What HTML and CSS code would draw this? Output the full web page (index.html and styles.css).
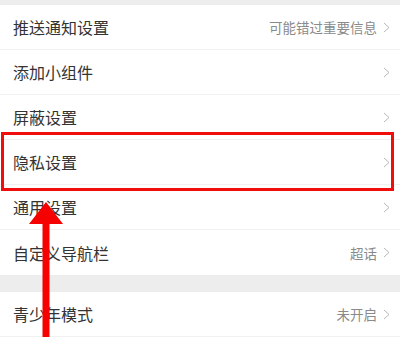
FILE: index.html
```html
<!DOCTYPE html>
<html>
<head>
<meta charset="utf-8">
<link rel="stylesheet" href="styles.css">
</head>
<body>
<div class="page">
  <div class="band band-top"></div>
  <div class="group">
    <div class="row"><span class="label">推送通知设置</span><span class="right"><span class="hint">可能错过重要信息</span><svg class="chev" viewBox="0 0 7 11"><path d="M1 1 L6 5.5 L1 10" /></svg></span></div>
    <div class="row"><span class="label">添加小组件</span><span class="right"><svg class="chev" viewBox="0 0 7 11"><path d="M1 1 L6 5.5 L1 10" /></svg></span></div>
    <div class="row"><span class="label">屏蔽设置</span><span class="right"><svg class="chev" viewBox="0 0 7 11"><path d="M1 1 L6 5.5 L1 10" /></svg></span></div>
    <div class="row"><span class="label">隐私设置</span><span class="right"><svg class="chev" viewBox="0 0 7 11"><path d="M1 1 L6 5.5 L1 10" /></svg></span></div>
    <div class="row"><span class="label">通用设置</span><span class="right"><svg class="chev" viewBox="0 0 7 11"><path d="M1 1 L6 5.5 L1 10" /></svg></span></div>
    <div class="row last"><span class="label">自定义导航栏</span><span class="right"><span class="hint">超话</span><svg class="chev" viewBox="0 0 7 11"><path d="M1 1 L6 5.5 L1 10" /></svg></span></div>
  </div>
  <div class="band band-mid"></div>
  <div class="group">
    <div class="row"><span class="label">青少年模式</span><span class="right"><span class="hint">未开启</span><svg class="chev" viewBox="0 0 7 11"><path d="M1 1 L6 5.5 L1 10" /></svg></span></div>
  </div>
  <div class="highlight"></div>
  <svg class="arrow" viewBox="0 0 40 140"><polygon points="20,0 37,22 23.5,22 23.5,140 16.5,140 16.5,22 3,22" /></svg>
</div>
</body>
</html>
```
FILE: styles.css
```css
html, body {
  margin: 0;
  padding: 0;
  background: #fff;
}
.page {
  position: relative;
  width: 400px;
  height: 337px;
  overflow: hidden;
  font-family: "Noto Sans CJK SC", "Noto Sans", sans-serif;
}
.band {
  background: #ededed;
}
.band-top {
  height: 5px;
}
.band-mid {
  height: 17px;
}
.group {
  background: #fff;
}
.row {
  height: 45px;
  box-sizing: border-box;
  display: flex;
  align-items: center;
  justify-content: space-between;
  padding: 0 10px 0 13px;
  border-bottom: 1px solid #f1f1f1;
}
.row.last {
  border-bottom: none;
}
.label {
  font-size: 16px;
  color: #333;
}
.right {
  display: flex;
  align-items: center;
  gap: 6px;
}
.hint {
  font-size: 13.5px;
  color: #8a8a8a;
}
.chev {
  width: 7px;
  height: 11px;
  fill: none;
  stroke: #b8b8b8;
  stroke-width: 1;
}
.highlight {
  position: absolute;
  left: 1px;
  top: 132px;
  width: 387px;
  height: 53px;
  border: 3px solid #f20d0d;
}
.arrow {
  position: absolute;
  left: 26px;
  top: 202px;
  width: 40px;
  height: 140px;
  fill: #f70000;
}
```
